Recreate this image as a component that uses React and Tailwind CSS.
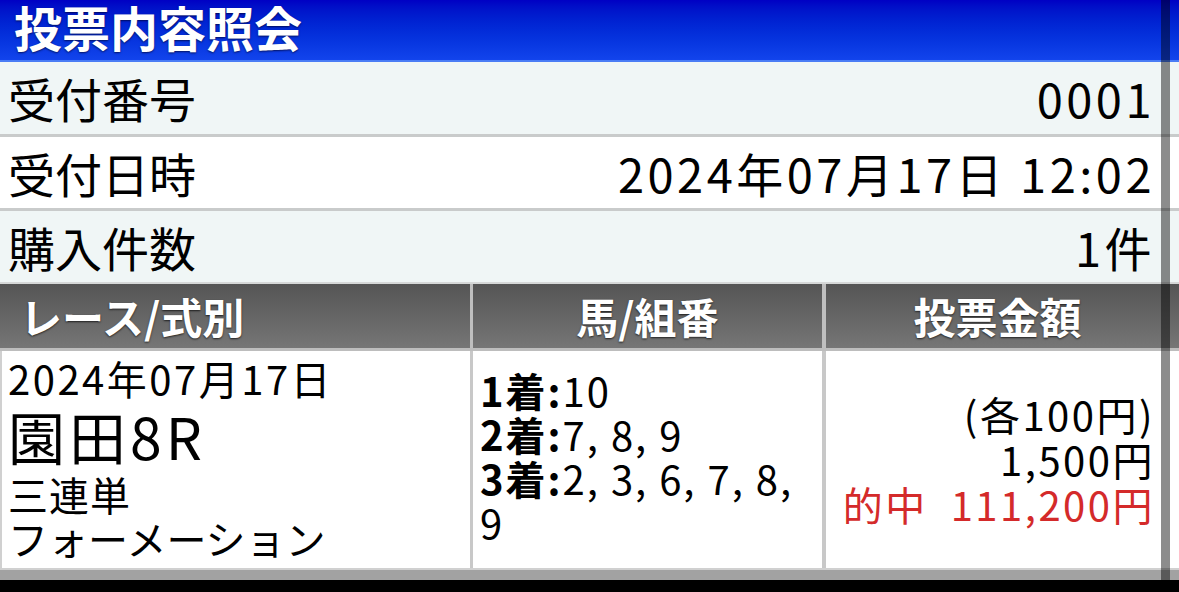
import React from "react";

const font = { fontFamily: '"Noto Sans CJK JP", "Noto Sans", sans-serif' };

function InfoRow({ label, value, light, height, border }) {
  return (
    <div
      className={`flex items-center justify-between pl-[8px] pr-[24px] text-[47px] leading-[56px] text-black ${height} ${border} ${
        light ? "bg-[#f0f6f6]" : "bg-white"
      }`}
    >
      <span>{label}</span>
      <span className="tracking-[3.5px]">{value}</span>
    </div>
  );
}

export default function App() {
  return (
    <div className="relative h-[592px] w-[1179px] overflow-hidden bg-black" style={font}>
      <div className="flex h-[62px] items-start border-b-2 border-[#4a7cf5] bg-gradient-to-b from-[#0000c4] to-[#1244ec] pl-[14px]">
        <h1 className="text-[48px] font-bold leading-[52px] text-white [text-shadow:0_1px_2px_rgba(0,0,40,0.7)]">
          投票内容照会
        </h1>
      </div>

      <InfoRow label="受付番号" value="0001" light height="h-[75px]" border="border-b-[3px] border-[#c9cbcb]" />
      <InfoRow label="受付日時" value="2024年07月17日 12:02" height="h-[74px]" border="border-b-[3px] border-[#c9cbcb]" />
      <InfoRow label="購入件数" value="1件" light height="h-[73px]" border="border-b-2 border-[#d6d8d8]" />

      <div className="grid h-[67px] grid-cols-[470px_352px_1fr] border-b-[3px] border-[#bdbdbd] bg-gradient-to-b from-[#555555] to-[#767676] text-[42px] font-bold leading-none text-white [text-shadow:0_1px_2px_rgba(0,0,0,0.7)]">
        <div className="flex items-center pl-[20px]">レース/式別</div>
        <div className="flex items-center justify-center border-l-[3px] border-[#bfbfbf]">馬/組番</div>
        <div className="flex items-center justify-center border-l-[4px] border-[#bfbfbf] pr-[10px]">投票金額</div>
      </div>

      <div className="grid h-[219px] grid-cols-[470px_352px_1fr] border-b-2 border-[#d0d0d0] bg-white text-black">
        <div className="flex flex-col border-l-2 border-[#d0d0d0] pl-[6px] pt-[5px] tracking-[2.5px]">
          <span className="text-[40px] leading-[44px]">2024年07月17日</span>
          <span className="text-[57px] leading-[70px] tracking-[4px]">園田8R</span>
          <span className="text-[40px] leading-[48px] tracking-[1px]">三連単</span>
          <span className="text-[40px] leading-[40px] tracking-[0px]">フォーメーション</span>
        </div>
        <div className="border-l-[3px] border-[#c8c8c8] pl-[7px] pr-[22px] pt-[17px] text-[40px] leading-[44px] tracking-[2px]">
          <div><b>1着:</b>10</div>
          <div><b>2着:</b>7, 8, 9</div>
          <div><b>3着:</b>2, 3, 6, 7, 8, 9</div>
        </div>
        <div className="flex flex-col items-end justify-center border-l-[4px] border-[#c8c8c8] pr-[24px] text-[40px] leading-[45px] tracking-[2.5px]">
          <span>(各100円)</span>
          <span>1,500円</span>
          <span className="whitespace-pre text-[#d42a2a]">的中  111,200円</span>
        </div>
      </div>

      <div className="h-[10px] bg-[#a2a2a2]" />

      <div className="absolute left-[1161px] top-0 h-full w-[9px] bg-black/45" />
    </div>
  );
}
